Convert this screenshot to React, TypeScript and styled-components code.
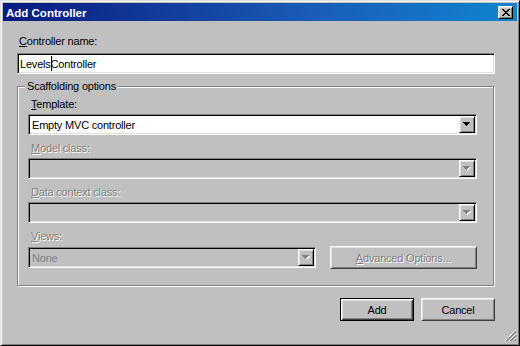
import React from "react";
import styled, { createGlobalStyle, css } from "styled-components";

const GlobalStyle = createGlobalStyle`
  html, body { margin: 0; padding: 0; background: #c0c0c0; }
  * { box-sizing: border-box; }
  body {
    font-family: "Liberation Sans", Arial, sans-serif;
    font-size: 11px;
    letter-spacing: -0.2px;
    color: #000;
  }
`;

const raised = css`
  border: 1px solid;
  border-color: #fff #000 #000 #fff;
  box-shadow: inset 1px 1px #dfdfdf, inset -1px -1px #808080;
  background: #c0c0c0;
`;

const sunken = css`
  border: 1px solid;
  border-color: #808080 #fff #fff #808080;
  box-shadow: inset 1px 1px #000, inset -1px -1px #dfdfdf;
`;

const Window = styled.div`
  position: relative;
  width: 520px;
  height: 346px;
  background: #c0c0c0;
  border: 1px solid;
  border-color: #dfdfdf #000 #000 #dfdfdf;
  box-shadow: inset 1px 1px #fff, inset -1px -1px #808080;
  padding: 2px;
  display: flex;
  flex-direction: column;
`;

const TitleBar = styled.div`
  height: 18px;
  display: flex;
  align-items: center;
  justify-content: space-between;
  padding: 0 0 0 3px;
  background: linear-gradient(to right, #0a1a7e 0%, #1a5cb8 60%, #1084d0 100%);
`;

const Title = styled.span`
  color: #fff;
  font-weight: bold;
  font-size: 11.5px;
  letter-spacing: 0;
  line-height: 18px;
  padding-top: 1px;
`;

const CloseButton = styled.div`
  ${raised};
  width: 15px;
  height: 13px;
  margin-right: 4px;
  display: flex;
  align-items: center;
  justify-content: center;
`;

const Body = styled.div`
  display: flex;
  flex-direction: column;
  padding: 14px 22px 0 14px;
`;

const Label = styled.div<{ $disabled?: boolean }>`
  line-height: 13px;
  margin: 0 0 ${(p) => (p.$disabled ? "3px" : "3px")} 3px;
  white-space: nowrap;
  color: ${(p) => (p.$disabled ? "#808080" : "#000")};
  text-shadow: ${(p) => (p.$disabled ? "1px 1px 0 #fff" : "none")};
`;

const TopLabel = styled(Label)`
  margin: 0 0 5px 2px;
`;

const Key = styled.span`
  text-decoration: underline;
`;

const TextBox = styled.div`
  ${sunken};
  height: 21px;
  background: #fff;
  display: flex;
  align-items: center;
  padding-left: 2px;
  white-space: nowrap;
`;

const Caret = styled.span`
  display: inline-block;
  width: 1px;
  height: 15px;
  background: #000;
  margin-right: -1px;
`;

const GroupBox = styled.div`
  position: relative;
  margin-top: 12px;
  width: calc(100% - 1px);
  border: 1px solid #808080;
  box-shadow: inset 1px 1px #fff, 1px 1px 0 #fff;
  padding: 11px 16px 16px 10px;
  display: flex;
  flex-direction: column;
  gap: 7px;
`;

const Legend = styled.span`
  position: absolute;
  top: -7px;
  left: 7px;
  padding: 0 2px;
  line-height: 13px;
  background: #c0c0c0;
`;

const Field = styled.div`
  display: flex;
  flex-direction: column;
`;

const Combo = styled.div<{ $disabled?: boolean; $flex?: boolean }>`
  ${sunken};
  height: 21px;
  flex: ${(p) => (p.$flex ? "1" : "none")};
  background: ${(p) => (p.$disabled ? "#c0c0c0" : "#fff")};
  color: ${(p) => (p.$disabled ? "#808080" : "#000")};
  display: flex;
  align-items: center;
  padding: 2px 2px 2px 3px;
  white-space: nowrap;
`;

const ComboText = styled.span`
  flex: 1;
`;

const ArrowButton = styled.div`
  ${raised};
  width: 16px;
  height: 17px;
  margin-right: -1px;
  display: flex;
  align-items: center;
  justify-content: center;
`;

const ViewsRow = styled.div`
  display: flex;
  align-items: center;
  gap: 14px;
`;

const PushButton = styled.div<{ $default?: boolean; $disabled?: boolean; $width: number }>`
  width: ${(p) => p.$width}px;
  height: 23px;
  display: flex;
  align-items: center;
  justify-content: center;
  background: #c0c0c0;
  white-space: nowrap;
  color: ${(p) => (p.$disabled ? "#808080" : "#000")};
  text-shadow: ${(p) => (p.$disabled ? "1px 1px 0 #fff" : "none")};
  ${(p) =>
    p.$default
      ? css`
          border: 1px solid #000;
          box-shadow: inset 1px 1px #fff, inset -1px -1px #404040,
            inset 2px 2px #dfdfdf, inset -2px -2px #808080;
        `
      : css`
          border: 1px solid;
          border-color: #fff #404040 #404040 #fff;
          box-shadow: inset 1px 1px #dfdfdf, inset -1px -1px #808080;
        `}
`;

const ButtonRow = styled.div`
  display: flex;
  justify-content: flex-end;
  gap: 7px;
  margin-top: 12px;
`;

const Grip = styled.svg`
  position: absolute;
  right: 3px;
  bottom: 3px;
`;

const Triangle: React.FC<{ disabled?: boolean }> = ({ disabled }) => {
  const rows = [
    [0, 0, 7],
    [1, 1, 5],
    [2, 2, 3],
    [3, 3, 1],
  ];
  return (
    <svg width="8" height="5" viewBox="0 0 8 5" shapeRendering="crispEdges">
      {disabled &&
        rows.map(([x, y, w], i) => (
          <rect key={"s" + i} x={x + 1} y={y + 1} width={w} height={1} fill="#fff" />
        ))}
      {rows.map(([x, y, w], i) => (
        <rect key={i} x={x} y={y} width={w} height={1} fill={disabled ? "#808080" : "#000"} />
      ))}
    </svg>
  );
};

const CloseGlyph = () => {
  const rows = [
    [[0, 2], [6, 2]],
    [[1, 2], [5, 2]],
    [[2, 4]],
    [[3, 2]],
    [[2, 4]],
    [[1, 2], [5, 2]],
    [[0, 2], [6, 2]],
  ];
  return (
    <svg width="8" height="7" viewBox="0 0 8 7" shapeRendering="crispEdges">
      {rows.map((segs, y) =>
        segs.map(([x, w], j) => <rect key={`${y}-${j}`} x={x} y={y} width={w} height={1} fill="#000" />)
      )}
    </svg>
  );
};

const ComboBox: React.FC<{ value?: string; disabled?: boolean; flex?: boolean }> = ({
  value,
  disabled,
  flex,
}) => (
  <Combo $disabled={disabled} $flex={flex}>
    <ComboText>{value}</ComboText>
    <ArrowButton>
      <Triangle disabled={disabled} />
    </ArrowButton>
  </Combo>
);

export default function App() {
  return (
    <>
      <GlobalStyle />
      <Window>
        <TitleBar>
          <Title>Add Controller</Title>
          <CloseButton>
            <CloseGlyph />
          </CloseButton>
        </TitleBar>
        <Body>
          <TopLabel>
            <Key>C</Key>ontroller name:
          </TopLabel>
          <TextBox>
            Levels
            <Caret />
            Controller
          </TextBox>
          <GroupBox>
            <Legend>Scaffolding options</Legend>
            <Field>
              <Label>
                <Key>T</Key>emplate:
              </Label>
              <ComboBox value="Empty MVC controller" />
            </Field>
            <Field>
              <Label $disabled>
                <Key>M</Key>odel class:
              </Label>
              <ComboBox disabled />
            </Field>
            <Field>
              <Label $disabled>
                <Key>D</Key>ata context class:
              </Label>
              <ComboBox disabled />
            </Field>
            <Field>
              <Label $disabled>
                <Key>V</Key>iews:
              </Label>
              <ViewsRow>
                <ComboBox value="None" disabled flex />
                <PushButton $disabled $width={147}>
                  <Key>A</Key>dvanced Options...
                </PushButton>
              </ViewsRow>
            </Field>
          </GroupBox>
          <ButtonRow>
            <PushButton $default $width={74}>
              Add
            </PushButton>
            <PushButton $width={74}>Cancel</PushButton>
          </ButtonRow>
        </Body>
        <Grip width="12" height="12" viewBox="0 0 12 12" shapeRendering="crispEdges">
          <line x1="11.5" y1="0.5" x2="0.5" y2="11.5" stroke="#fff" />
          <line x1="11.5" y1="1.5" x2="1.5" y2="11.5" stroke="#808080" />
          <line x1="11.5" y1="2.5" x2="2.5" y2="11.5" stroke="#808080" />
          <line x1="11.5" y1="4.5" x2="4.5" y2="11.5" stroke="#fff" />
          <line x1="11.5" y1="5.5" x2="5.5" y2="11.5" stroke="#808080" />
          <line x1="11.5" y1="6.5" x2="6.5" y2="11.5" stroke="#808080" />
          <line x1="11.5" y1="8.5" x2="8.5" y2="11.5" stroke="#fff" />
          <line x1="11.5" y1="9.5" x2="9.5" y2="11.5" stroke="#808080" />
          <line x1="11.5" y1="10.5" x2="10.5" y2="11.5" stroke="#808080" />
        </Grip>
      </Window>
    </>
  );
}
